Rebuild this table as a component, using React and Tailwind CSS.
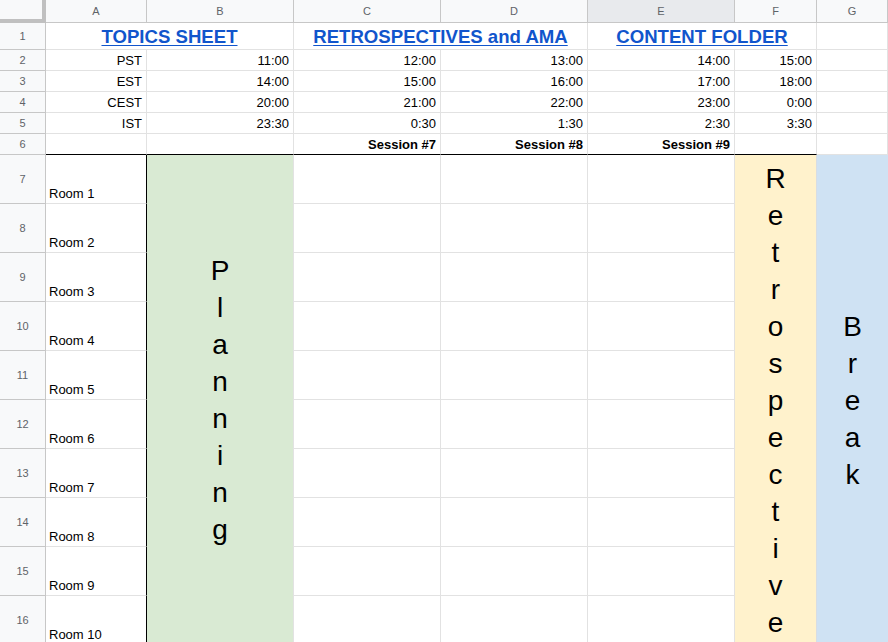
const cols = ["A", "B", "C", "D", "E", "F", "G"];

const times = [
  ["PST", "11:00", "12:00", "13:00", "14:00", "15:00"],
  ["EST", "14:00", "15:00", "16:00", "17:00", "18:00"],
  ["CEST", "20:00", "21:00", "22:00", "23:00", "0:00"],
  ["IST", "23:30", "0:30", "1:30", "2:30", "3:30"],
];

const rowHead =
  "flex items-center justify-center bg-[#f8f9fa] border-r border-b border-[#c7c7c7] text-[11px] text-[#5f6368]";
const cell = "border-r border-b border-[#e2e2e2]";

function Vertical({ word }) {
  return (
    <div className="flex flex-col items-center justify-center h-full text-[28px] leading-[37px] text-black">
      {word.split("").map((ch, i) => (
        <span key={i}>{ch}</span>
      ))}
    </div>
  );
}

function LinkCell({ label }) {
  return (
    <div className={`col-span-2 flex items-center justify-center pt-[2px] ${cell}`}>
      <span className="text-[18.6px] font-bold text-[#1155cc] underline underline-offset-2">
        {label}
      </span>
    </div>
  );
}

export default function App() {
  const rooms = Array.from({ length: 10 }, (_, i) => i + 1);

  return (
    <div
      className="w-[888px] h-[642px] overflow-hidden bg-white"
      style={{ fontFamily: '"Liberation Sans", Arial, sans-serif' }}
    >
      <div className="grid grid-cols-[46px_101px_147px_147px_147px_147px_82px_71px] grid-rows-[23px_27px_21px_21px_21px_21px_21px_repeat(10,49px)] text-[13px] text-black">
        {/* column headers */}
        <div className="bg-[#f8f9fa] border-r-4 border-b-4 border-[#c0c0c0]" />
        {cols.map((c) => (
          <div
            key={c}
            className={`flex items-center justify-center border-r border-b border-[#c7c7c7] text-[11px] text-[#5f6368] ${
              c === "E" ? "bg-[#e8eaed]" : "bg-[#f8f9fa]"
            }`}
          >
            {c}
          </div>
        ))}

        {/* row 1 links */}
        <div className={rowHead}>1</div>
        <LinkCell label="TOPICS SHEET" />
        <LinkCell label="RETROSPECTIVES and AMA" />
        <LinkCell label="CONTENT FOLDER" />
        <div className={cell} />

        {/* time zones */}
        {times.map((row, r) => (
          <div key={r} className="contents">
            <div className={rowHead}>{r + 2}</div>
            {row.map((v, i) => (
              <div key={i} className={`flex items-end justify-end pr-[4px] pb-[1px] leading-4 ${cell}`}>
                {v}
              </div>
            ))}
            <div className={cell} />
          </div>
        ))}

        {/* row 6 sessions */}
        <div className={rowHead}>6</div>
        <div className="border-r border-[#e2e2e2] border-b border-b-black" />
        <div className="border-r border-[#e2e2e2] border-b border-b-black" />
        {["Session #7", "Session #8", "Session #9"].map((s) => (
          <div
            key={s}
            className="flex items-end justify-end pr-[4px] pb-[1px] leading-4 font-bold border-r border-[#e2e2e2] border-b border-b-black"
          >
            {s}
          </div>
        ))}
        <div className="border-r border-[#e2e2e2] border-b border-b-black" />
        <div className={cell} />

        {/* rooms block */}
        {rooms.map((n) => (
          <div key={n} className="contents">
            <div className={rowHead}>{n + 6}</div>
            <div className="flex items-end pl-[3px] pb-[1px] leading-4 border-b border-[#e2e2e2] border-r border-r-black">
              Room {n}
            </div>
            {n === 1 && (
              <div className="row-span-10 bg-[#d9ead3] border-r border-[#e2e2e2]">
                <Vertical word="Planning" />
              </div>
            )}
            <div className={cell} />
            <div className={cell} />
            <div className={cell} />
            {n === 1 && (
              <>
                <div className="row-span-10 bg-[#fff2cc] border-r border-[#d8dde3]">
                  <Vertical word="Retrospective" />
                </div>
                <div className="row-span-10 bg-[#cfe2f3]">
                  <Vertical word="Break" />
                </div>
              </>
            )}
          </div>
        ))}
      </div>
    </div>
  );
}
